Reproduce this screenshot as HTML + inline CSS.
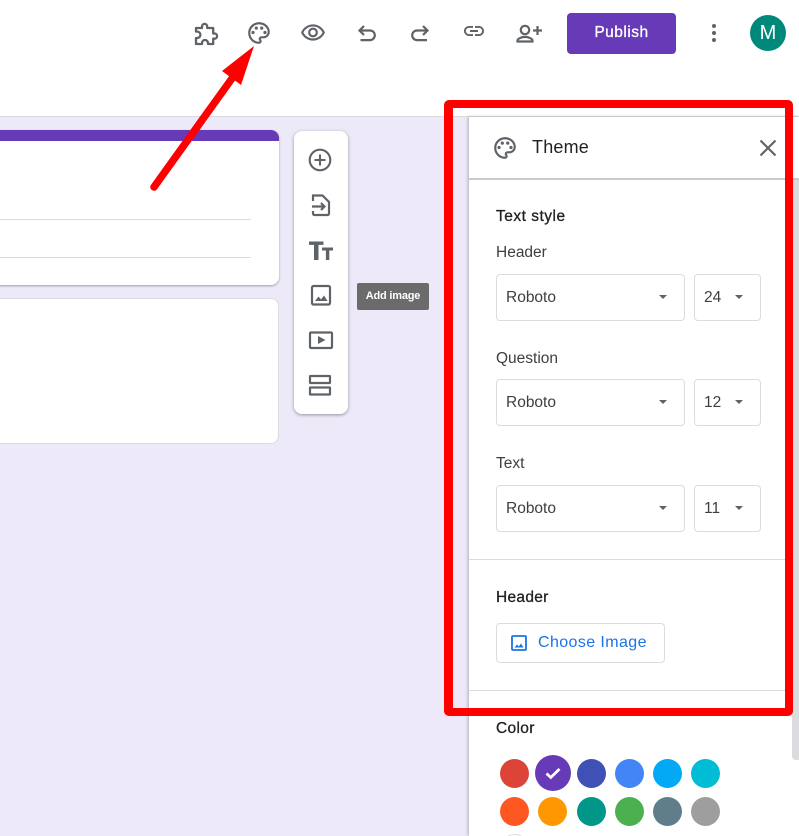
<!DOCTYPE html>
<html lang="en">
<head>
<meta charset="utf-8">
<title>Theme</title>
<style>
html,body{margin:0;padding:0;width:799px;height:836px;overflow:hidden}
#p{position:absolute;left:0;top:0;width:799px;height:836px;overflow:hidden;background:#ede9f8;font-family:"Liberation Sans",sans-serif;color:#202124}
.a{position:absolute;box-sizing:border-box}
.t{position:absolute;white-space:nowrap;line-height:20px}
.m{-webkit-text-stroke:.3px currentColor}
svg{position:absolute;overflow:visible}
.sel{position:absolute;box-sizing:border-box;background:#fff;border:1px solid #dadce0;border-radius:4px;height:47px}
.sel span{position:absolute;left:9px;top:13px;font-size:15.5px;line-height:20px;color:#3c4043}
.sel i{position:absolute;top:20px;width:0;height:0;border-left:4.5px solid transparent;border-right:4.5px solid transparent;border-top:4.5px solid #5f6368}
.c{position:absolute;border-radius:50%;width:29px;height:29px}
</style>
</head>
<body>
<div id="p">
<div class="a" style="left:0;top:0;width:799px;height:117px;background:#fff;border-bottom:1px solid #dadce0"></div>

<!-- top icons -->
<svg style="left:193px;top:21px" width="26" height="26" viewBox="0 0 26 26"><path fill="none" stroke="#5f6368" stroke-width="2.3" stroke-linejoin="round" d="M3 7h6V5.5a2.6 2.6 0 0 1 5.2 0V7h6v5.500h1.300a2.600 2.600 0 0 1 0 5.200h-1.300V23h-5.200v-1a3 3 0 0 0-6 0v1H3v-6h1.200a3.200 3.200 0 0 0 0-6.400L3 10.500z"/></svg>
<svg style="left:246px;top:20px" width="26" height="26" viewBox="0 0 24 24" fill="#5f6368"><path d="M12 22C6.490 22 2 17.510 2 12S6.490 2 12 2s10 4.040 10 9c0 3.310-2.690 6-6 6h-1.770c-.28 0-.5.22-.5.5 0 .12.05.23.13.33.41.47.64 1.060.64 1.670 0 1.380-1.120 2.500-2.500 2.500zm0-18c-4.410 0-8 3.590-8 8s3.590 8 8 8c.28 0 .5-.22.5-.5 0-.16-.08-.28-.14-.35-.41-.46-.63-1.050-.63-1.650 0-1.380 1.120-2.500 2.500-2.500H16c2.210 0 4-1.790 4-4 0-3.860-3.590-7-8-7z"/><circle cx="6.500" cy="11.500" r="1.500"/><circle cx="9.500" cy="7.500" r="1.500"/><circle cx="14.500" cy="7.500" r="1.500"/><circle cx="17.500" cy="11.500" r="1.500"/></svg>
<svg style="left:300px;top:20px" width="26" height="26" viewBox="0 0 24 24" fill="#5f6368"><path d="M12 6c3.790 0 7.170 2.130 8.820 5.500C19.170 14.870 15.790 17 12 17s-7.170-2.130-8.820-5.500C4.830 8.130 8.210 6 12 6m0-2C7 4 2.730 7.110 1 11.500 2.730 15.890 7 19 12 19s9.270-3.110 11-7.500C21.270 7.110 17 4 12 4zm0 5c1.380 0 2.500 1.120 2.500 2.500S13.380 14 12 14s-2.500-1.120-2.500-2.500S10.620 9 12 9m0-2c-2.480 0-4.500 2.020-4.500 4.500S9.520 16 12 16s4.500-2.020 4.500-4.500S14.480 7 12 7z"/></svg>
<svg style="left:355px;top:22px" width="24" height="24" viewBox="0 0 24 24" fill="none" stroke="#5f6368" stroke-width="2.200"><path d="M9 4L4.500 8.500 9 13"/><path d="M4.500 8.500H15a4.800 4.800 0 0 1 0 9.600H5.500"/></svg>
<svg style="left:408px;top:22px" width="24" height="24" viewBox="0 0 24 24" fill="none" stroke="#5f6368" stroke-width="2.200"><path d="M15 4L19.500 8.500 15 13"/><path d="M19.500 8.500H9a4.800 4.800 0 0 0 0 9.600h10"/></svg>
<svg style="left:462px;top:19px" width="24" height="24" viewBox="0 0 24 24" fill="#5f6368"><path d="M3.900 12c0-1.710 1.390-3.100 3.100-3.100h4V7H7c-2.760 0-5 2.240-5 5s2.240 5 5 5h4v-1.900H7c-1.710 0-3.100-1.390-3.100-3.100zM8 13h8v-2H8v2zm9-6h-4v1.900h4c1.710 0 3.100 1.390 3.100 3.100s-1.390 3.100-3.100 3.100h-4V17h4c2.760 0 5-2.240 5-5s-2.240-5-5-5z"/></svg>
<svg style="left:513px;top:20px" width="30" height="26" viewBox="0 0 30 26" fill="none" stroke="#5f6368" stroke-width="2.200"><circle cx="12" cy="10" r="4.200"/><path d="M4.500 21.500v-1c0-2 4.500-3.600 7.500-3.600s7.500 1.600 7.500 3.600v1z"/><path d="M24.500 6v9M20 10.500h9"/></svg>

<!-- publish -->
<div class="a" style="left:567px;top:13px;width:109px;height:41px;background:#673ab7;border-radius:4px"></div>
<div class="t m" style="left:567px;top:23px;width:109px;text-align:center;color:#fff;font-size:15.5px;letter-spacing:.5px;line-height:20px">Publish</div>
<svg style="left:702px;top:21px" width="24" height="24" viewBox="0 0 24 24" fill="#5f6368"><circle cx="12" cy="5" r="2"/><circle cx="12" cy="12" r="2"/><circle cx="12" cy="19" r="2"/></svg>
<div class="a" style="left:750px;top:15px;width:36px;height:36px;border-radius:50%;background:#00897b;color:#fff;font-size:20px;line-height:36px;text-align:center">M</div>

<!-- cards -->
<div class="a" style="left:-10px;top:130px;width:289px;height:155px;background:#fff;border-radius:8px;box-shadow:0 1px 2px rgba(60,64,67,.45);overflow:hidden"><div style="height:11px;background:#673ab7"></div></div>
<div class="a" style="left:0;top:219px;width:251px;height:1px;background:#dadce0"></div>
<div class="a" style="left:0;top:257px;width:251px;height:1px;background:#dadce0"></div>
<div class="a" style="left:-10px;top:298px;width:289px;height:146px;background:#fff;border-radius:8px;border:1px solid #dadce0"></div>

<!-- side toolbar -->
<div class="a" style="left:294px;top:131px;width:54px;height:283px;background:#fff;border-radius:8px;box-shadow:0 1px 3px rgba(60,64,67,.5)"></div>
<svg style="left:308px;top:148px" width="24" height="24" viewBox="0 0 24 24" fill="none" stroke="#5f6368" stroke-width="2.100"><circle cx="12" cy="12" r="10.300"/><path d="M12 6.500v11M6.500 12h11"/></svg>
<svg style="left:308px;top:193px" width="24" height="26" viewBox="0 0 24 26" fill="none" stroke="#5f6368" stroke-width="2.200"><path d="M5 8V2.500h9.500L21 9v11.500a1.500 1.500 0 0 1-1.500 1.500H6.500A1.500 1.500 0 0 1 5 20.500V18"/><path d="M4 13.500h12M13 10l3.500 3.500L13 17"/></svg>
<svg style="left:308px;top:240px" width="25" height="22" viewBox="0 0 25 22" fill="#5f6368"><path d="M1 1.500h14.500v3.400h-5V20H6V4.900H1z"/><path d="M14 7.500h11v3h-3.700V20h-3.400v-9.500H14z"/></svg>
<svg style="left:309px;top:283px" width="24" height="24" viewBox="0 0 24 24" fill="none" stroke="#5f6368" stroke-width="2.200"><rect x="3" y="3" width="18" height="18.500" rx="1.500"/><path fill="#5f6368" stroke="none" d="M6 18l3.500-4.500 2.500 3 3-4 3.500 5.500z"/></svg>
<svg style="left:308px;top:328px" width="26" height="24" viewBox="0 0 26 24" fill="none" stroke="#5f6368" stroke-width="2.200"><rect x="2" y="4.500" width="22" height="15.500" rx="1"/><path fill="#5f6368" stroke="none" d="M10 8l7.500 4-7.500 4z"/></svg>
<svg style="left:308px;top:373px" width="24" height="24" viewBox="0 0 24 24" fill="none" stroke="#5f6368" stroke-width="2.200"><rect x="2" y="3" width="20" height="7" rx=".5"/><rect x="2" y="14.500" width="20" height="7" rx=".5"/></svg>

<!-- tooltip -->
<div class="a" style="left:357px;top:283px;width:72px;height:27px;background:#6b6b6b;border-radius:2px"></div>
<div class="t" style="left:357px;top:286px;width:72px;text-align:center;color:#fff;font-size:11px;font-weight:bold;letter-spacing:-.2px">Add image</div>

<!-- panel -->
<div class="a" style="left:469px;top:117px;width:330px;height:719px;background:#fff;box-shadow:-1px 0 3px rgba(60,64,67,.35)"></div>
<div class="a" style="left:469px;top:178px;width:330px;height:2px;background:#c9cacd"></div>
<svg style="left:492px;top:135px" width="26" height="26" viewBox="0 0 24 24" fill="#5f6368"><path d="M12 22C6.490 22 2 17.510 2 12S6.490 2 12 2s10 4.040 10 9c0 3.310-2.690 6-6 6h-1.770c-.28 0-.5.22-.5.5 0 .12.05.23.13.33.41.47.64 1.060.64 1.670 0 1.380-1.120 2.500-2.500 2.500zm0-18c-4.410 0-8 3.590-8 8s3.590 8 8 8c.28 0 .5-.22.5-.5 0-.16-.08-.28-.14-.35-.41-.46-.63-1.050-.63-1.650 0-1.380 1.120-2.500 2.500-2.500H16c2.210 0 4-1.790 4-4 0-3.860-3.590-7-8-7z"/><circle cx="6.500" cy="11.500" r="1.500"/><circle cx="9.500" cy="7.500" r="1.500"/><circle cx="14.500" cy="7.500" r="1.500"/><circle cx="17.500" cy="11.500" r="1.500"/></svg>
<div class="t" style="left:532px;top:137px;font-size:18px;color:#202124;letter-spacing:.2px">Theme</div>
<svg style="left:756px;top:136px" width="24" height="24" viewBox="0 0 24 24" fill="none" stroke="#5f6368" stroke-width="2.100"><path d="M4.500 4.500l15 15M19.500 4.500l-15 15"/></svg>
<div class="a" style="left:792px;top:180px;width:7px;height:580px;background:#dadce0;border-radius:0 0 0 4px"></div>

<div class="t m" style="left:496px;top:207px;font-size:15.5px;letter-spacing:.5px">Text style</div>
<div class="t" style="left:496px;top:243px;font-size:15.5px;color:#3c4043">Header</div>
<div class="sel" style="left:496px;top:274px;width:189px"><span>Roboto</span><i style="left:162px"></i></div>
<div class="sel" style="left:694px;top:274px;width:67px"><span>24</span><i style="left:40px"></i></div>
<div class="t" style="left:496px;top:349px;font-size:15.5px;color:#3c4043">Question</div>
<div class="sel" style="left:496px;top:379px;width:189px"><span>Roboto</span><i style="left:162px"></i></div>
<div class="sel" style="left:694px;top:379px;width:67px"><span>12</span><i style="left:40px"></i></div>
<div class="t" style="left:496px;top:454px;font-size:15.5px;color:#3c4043">Text</div>
<div class="sel" style="left:496px;top:485px;width:189px"><span>Roboto</span><i style="left:162px"></i></div>
<div class="sel" style="left:694px;top:485px;width:67px"><span>11</span><i style="left:40px"></i></div>

<div class="a" style="left:469px;top:559px;width:330px;height:1px;background:#dadce0"></div>
<div class="t m" style="left:496px;top:588px;font-size:15.5px;letter-spacing:.3px">Header</div>
<div class="a" style="left:496px;top:623px;width:169px;height:40px;border:1px solid #dadce0;border-radius:4px;background:#fff"></div>
<svg style="left:510px;top:634px" width="18" height="18" viewBox="0 0 18 18" fill="none" stroke="#1a73e8" stroke-width="1.800"><rect x="2" y="2" width="14" height="14" rx="1"/><path fill="#1a73e8" stroke="none" d="M4.500 13.500l2.500-3 1.800 2 2.200-3 2.500 4z"/></svg>
<div class="t" style="left:538px;top:633px;font-size:16px;color:#1a73e8;letter-spacing:.4px">Choose Image</div>
<div class="a" style="left:469px;top:690px;width:330px;height:1px;background:#dadce0"></div>
<div class="t m" style="left:496px;top:719px;font-size:15.5px;letter-spacing:.35px">Color</div>

<div class="c" style="left:500px;top:759px;background:#db4437"></div>
<div class="a" style="left:535px;top:755px;width:36px;height:36px;border-radius:50%;background:#673ab7"></div>
<svg style="left:543px;top:763px" width="20" height="20" viewBox="0 0 20 20" fill="none" stroke="#fff" stroke-width="2.800"><path d="M3.500 10.500l4.300 4L16.500 6"/></svg>
<div class="c" style="left:577px;top:759px;background:#3f51b5"></div>
<div class="c" style="left:615px;top:759px;background:#4285f4"></div>
<div class="c" style="left:653px;top:759px;background:#03a9f4"></div>
<div class="c" style="left:691px;top:759px;background:#00bcd4"></div>
<div class="c" style="left:500px;top:797px;background:#ff5722"></div>
<div class="c" style="left:538px;top:797px;background:#ff9800"></div>
<div class="c" style="left:577px;top:797px;background:#009688"></div>
<div class="c" style="left:615px;top:797px;background:#4caf50"></div>
<div class="c" style="left:653px;top:797px;background:#607d8b"></div>
<div class="c" style="left:691px;top:797px;background:#9e9e9e"></div>
<div class="c" style="left:500px;top:834px;background:#fff;border:1px solid #dadce0;box-sizing:border-box"></div>

<!-- annotations -->
<div class="a" style="left:444px;top:100px;width:349px;height:616px;border:solid #ff0000;border-width:8px 8px 8px 9px;border-radius:5px"></div>
<svg style="left:0;top:0" width="799" height="836" viewBox="0 0 799 836"><path d="M154 187L233 77" stroke="#ff0000" stroke-width="7.5" stroke-linecap="round" fill="none"/><path d="M254 46L222 71 241 85z" fill="#ff0000"/></svg>
</div>
</body>
</html>
